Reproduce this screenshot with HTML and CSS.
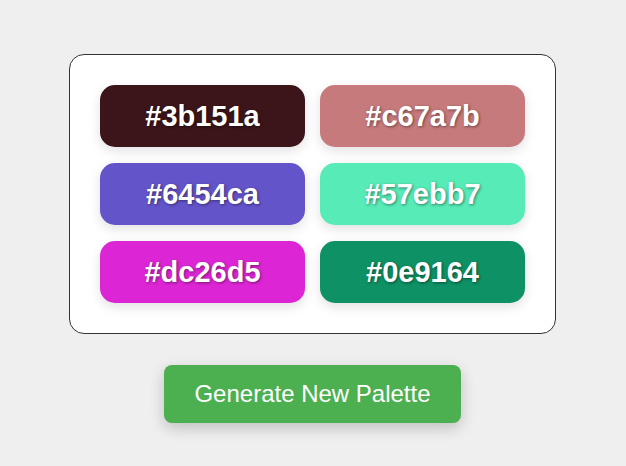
FILE: index.html
```html
<!DOCTYPE html>
<html>
<head>
<meta charset="utf-8">
<link rel="stylesheet" href="styles.css">
</head>
<body>
<main class="app">
  <section class="palette">
    <div class="swatch" style="background:#3b151a">#3b151a</div>
    <div class="swatch" style="background:#c67a7b">#c67a7b</div>
    <div class="swatch" style="background:#6454ca">#6454ca</div>
    <div class="swatch" style="background:#57ebb7">#57ebb7</div>
    <div class="swatch" style="background:#dc26d5">#dc26d5</div>
    <div class="swatch" style="background:#0e9164">#0e9164</div>
  </section>
  <button class="generate">Generate New Palette</button>
</main>
</body>
</html>
```
FILE: styles.css
```css
html, body {
  margin: 0;
  padding: 0;
  background: #efefef;
  font-family: "Liberation Sans", Arial, sans-serif;
}
body {
  min-height: 100vh;
}
.app {
  display: flex;
  flex-direction: column;
  align-items: center;
  padding-top: 54px;
  padding-bottom: 40px;
  gap: 31px;
}
.palette {
  display: grid;
  grid-template-columns: 205px 205px;
  grid-auto-rows: 62px;
  column-gap: 15px;
  row-gap: 16px;
  padding: 30px;
  background: #fff;
  border: 1px solid #333;
  border-radius: 15px;
  margin-left: -1px;
}
.swatch {
  display: flex;
  align-items: center;
  justify-content: center;
  border-radius: 15px;
  color: #fff;
  font-weight: bold;
  font-size: 29px;
  text-shadow: 1px 1px 3px rgba(0,0,0,0.45);
  box-shadow: 0 4px 12px rgba(0,0,0,0.12);
}
.generate {
  font-family: "Liberation Sans", Arial, sans-serif;
  font-size: 24px;
  color: #fff;
  background: #4caf50;
  border: none;
  border-radius: 8px;
  padding: 15px 30px;
  margin-left: -1px;
  box-shadow: 0 5px 15px rgba(0,0,0,0.2);
  cursor: pointer;
}
```
